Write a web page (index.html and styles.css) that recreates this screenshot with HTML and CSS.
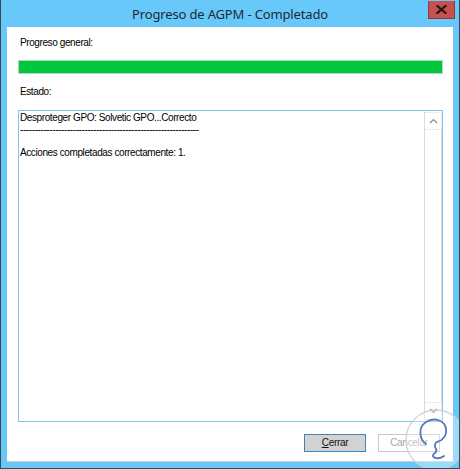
FILE: index.html
```html
<!DOCTYPE html>
<html lang="es">
<head>
<meta charset="utf-8">
<title>Progreso de AGPM - Completado</title>
<link rel="stylesheet" href="styles.css">
</head>
<body>
<div class="window">
  <div class="titlebar">
    <div class="title">Progreso de AGPM - Completado</div>
    <div class="close" aria-label="Cerrar">
      <svg width="11" height="9" viewBox="0 0 11 9"><path d="M1.5 1 L9.5 8 M9.5 1 L1.5 8" stroke="#2a1414" stroke-width="2.2" stroke-linecap="square"/></svg>
    </div>
  </div>
  <div class="client">
    <div class="label first">Progreso general:</div>
    <div class="progress"><div class="progress-fill" style="width:100%"></div></div>
    <div class="label second">Estado:</div>
    <div class="textbox">
      <div class="text">
        <div>Desproteger GPO: Solvetic GPO...Correcto</div>
        <div>-------------------------------------------------------------</div>
        <div>&nbsp;</div>
        <div>Acciones completadas correctamente: 1.</div>
      </div>
      <div class="scrollbar">
        <div class="arrow">
          <svg width="9" height="6" viewBox="0 0 9 6"><path d="M1 5 L4.5 1.5 L8 5" fill="none" stroke="#8a8a8a" stroke-width="1.2"/></svg>
        </div>
        <div class="track"></div>
        <div class="arrow">
          <svg width="9" height="6" viewBox="0 0 9 6"><path d="M1 1 L4.5 4.5 L8 1" fill="none" stroke="#8a8a8a" stroke-width="1.2"/></svg>
        </div>
      </div>
    </div>
    <div class="buttons">
      <button class="btn default"><span class="u">C</span>errar</button>
      <button class="btn disabled">Cancelar</button>
    </div>
  </div>
  <svg class="watermark" width="64" height="64" viewBox="0 0 64 64">
    <circle cx="32" cy="32" r="30" fill="rgba(255,255,255,0.35)" stroke="rgba(200,205,210,0.8)" stroke-width="1.5"/>
    <path d="M22 36 C15 31 14 19 22 14 C30 9 41 12 42 21 C43 28 38 33 33 34 C31 35 30 38 32 41 C34 44 30 45 29 47 C28 50 35 52 40 48" fill="none" stroke="#5278b8" stroke-width="1.8" stroke-linecap="round" stroke-linejoin="round"/>
  </svg>
</div>
</body>
</html>
```
FILE: styles.css
```css
html, body {
  margin: 0;
  padding: 0;
  background: #ffffff;
}
.window {
  position: relative;
  width: 460px;
  height: 469px;
  box-sizing: border-box;
  background: #68c8f9;
  border-left: 1px solid #3a4a55;
  border-right: 1px solid #3a4a55;
  border-bottom: 1px solid #3a4a55;
  display: flex;
  flex-direction: column;
  overflow: hidden;
}
.titlebar {
  height: 27px;
  flex: none;
  display: flex;
  align-items: flex-start;
  justify-content: center;
  position: relative;
}
.title {
  font-family: "Noto Sans", "Open Sans", sans-serif;
  font-size: 13px;
  letter-spacing: -0.15px;
  color: #1c2a38;
  line-height: 18px;
  margin-top: 5px;
}
.close {
  position: absolute;
  top: 1px;
  right: 4px;
  width: 27px;
  height: 18px;
  box-sizing: border-box;
  background: #c75050;
  border: 1px solid #8e3a3a;
  border-top: none;
  display: flex;
  align-items: center;
  justify-content: center;
}
.client {
  flex: 1;
  margin: 0 6px 6px 6px;
  background: #ffffff;
  border-bottom: 1px solid #c9c9c9;
  padding: 0 10px 0 11px;
  display: flex;
  flex-direction: column;
  font-family: "Liberation Sans", Arial, sans-serif;
  font-size: 10px;
  letter-spacing: -0.4px;
  color: #000;
}
.label {
  line-height: 12px;
  height: 12px;
}
.label.first {
  margin-top: 10px;
  padding-left: 2px;
}
.progress {
  margin-top: 11px;
  height: 14px;
  box-sizing: border-box;
  border: 1px solid #b9d4c2;
  background: #e6e6e6;
}
.progress-fill {
  height: 100%;
  background: #00c83c;
}
.label.second {
  margin-top: 12px;
  padding-left: 2px;
}
.textbox {
  margin-top: 12px;
  height: 312px;
  box-sizing: border-box;
  border: 1px solid #7cc4ea;
  display: flex;
  background: #fff;
}
.text {
  flex: 1;
  padding: 1px 1px 0 1px;
  line-height: 11.7px;
  white-space: nowrap;
  overflow: hidden;
}
.scrollbar {
  width: 17px;
  flex: none;
  display: flex;
  flex-direction: column;
  border-left: 1px solid #dcdcdc;
  margin: 1px 0;
}
.arrow {
  height: 16px;
  display: flex;
  align-items: center;
  justify-content: center;
  border: 1px solid #ececec;
  border-left: none;
}
.track {
  flex: 1;
  border-right: 1px solid #dcdcdc;
}
.buttons {
  display: flex;
  justify-content: flex-end;
  gap: 12px;
  margin-top: 12px;
  padding-right: 3px;
}
.btn {
  width: 62px;
  height: 18px;
  box-sizing: border-box;
  font-family: "Liberation Sans", Arial, sans-serif;
  font-size: 10px;
  letter-spacing: -0.3px;
  padding: 0;
  line-height: 14px;
}
.btn.default {
  background: #d2d2d2;
  border: 1px solid #3d84bd;
  color: #111;
}
.btn.disabled {
  background: #ffffff;
  border: 1px solid #c8c8c8;
  color: #a6a6a6;
}
.u {
  text-decoration: underline;
}
.watermark {
  position: absolute;
  left: 403px;
  top: 408px;
}
```
